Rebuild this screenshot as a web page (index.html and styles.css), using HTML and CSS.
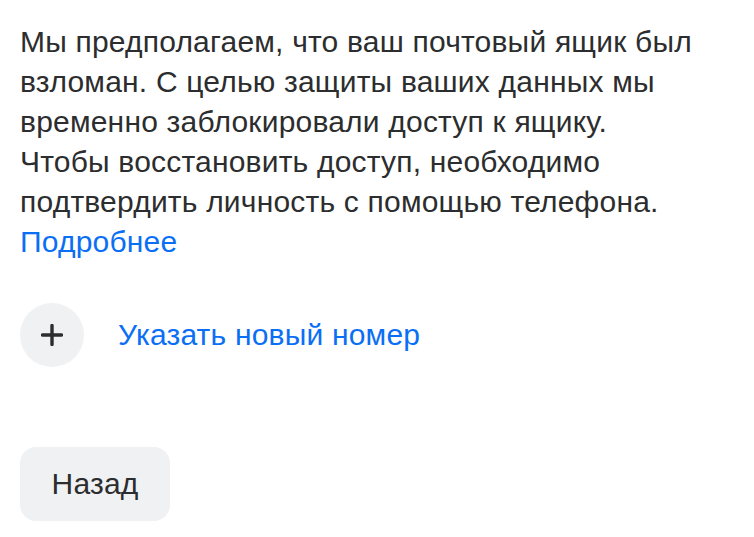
FILE: index.html
```html
<!DOCTYPE html>
<html lang="ru">
<head>
<meta charset="utf-8">
<link rel="stylesheet" href="styles.css">
</head>
<body>
<main class="page">
  <p class="text">Мы предполагаем, что ваш почтовый ящик был взломан. С целью защиты ваших данных мы временно заблокировали доступ к ящику. Чтобы восстановить доступ, необходимо подтвердить личность с помощью телефона. <a class="link" href="#">Подробнее</a></p>
  <div class="add-row">
    <span class="add-icon">
      <svg width="22" height="22" viewBox="0 0 22 22"><path d="M11 1.5v19M1.5 11h19" stroke="#2c2d2e" stroke-width="3.4" stroke-linecap="round" fill="none"/></svg>
    </span>
    <a class="add-link" href="#">Указать новый номер</a>
  </div>
  <button class="back" type="button">Назад</button>
</main>
</body>
</html>
```
FILE: styles.css
```css
html, body {
  margin: 0;
  padding: 0;
  background: #ffffff;
}
.page {
  padding: 22px 20px 0 20px;
  width: 680px;
  box-sizing: content-box;
  font-family: "Liberation Sans", Arial, sans-serif;
  font-size: 30px;
  letter-spacing: 0.2px;
  line-height: 40px;
  color: #2c2d2e;
  display: flex;
  flex-direction: column;
  align-items: flex-start;
}
.text {
  margin: 0;
}
.link, .add-link {
  color: #0b6ff5;
  text-decoration: none;
}
.add-row {
  margin-top: 41px;
  display: flex;
  align-items: center;
  gap: 34px;
}
.add-icon {
  width: 64px;
  height: 64px;
  border-radius: 50%;
  background: #f0f1f3;
  display: flex;
  align-items: center;
  justify-content: center;
}
.back {
  margin-top: 80px;
  width: 150px;
  height: 74px;
  border: none;
  border-radius: 16px;
  background: #f0f1f3;
  font-family: inherit;
  font-size: 30px;
  letter-spacing: 0.2px;
  color: #2c2d2e;
  padding: 0;
}
```
